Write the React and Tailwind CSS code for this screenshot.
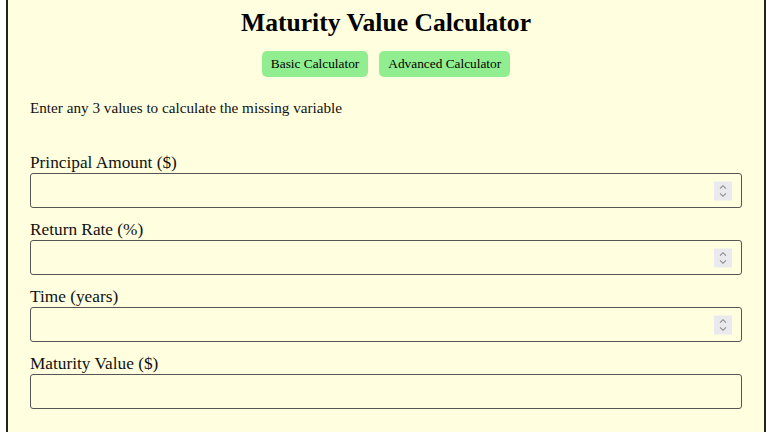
import { useState } from 'react';

const FIELDS = [
  { id: 'principal', label: 'Principal Amount ($)', spinner: true },
  { id: 'rate', label: 'Return Rate (%)', spinner: true },
  { id: 'time', label: 'Time (years)', spinner: true },
  { id: 'maturity', label: 'Maturity Value ($)', spinner: false },
];

// Chrome-style number spinner, drawn since the headless browser hides the native one
const Spinner = () => (
  <span className="pointer-events-none absolute right-[10px] top-1/2 flex h-[19px] w-[18px] -translate-y-1/2 flex-col items-center justify-center gap-[3px] bg-[#e9e9ee]">
    <svg width="8" height="5" viewBox="0 0 8 5" fill="none">
      <path d="M1 4.2 4 1.2 7 4.2" stroke="#8a8a8f" strokeWidth="1.1" />
    </svg>
    <svg width="8" height="5" viewBox="0 0 8 5" fill="none">
      <path d="M1 0.8 4 3.8 7 0.8" stroke="#8a8a8f" strokeWidth="1.1" />
    </svg>
  </span>
);

const App = () => {
  const [values, setValues] = useState({ principal: '', rate: '', time: '', maturity: '' });

  return (
    <div className="min-h-screen bg-white font-['Liberation_Serif','Times_New_Roman',serif] text-[#111]">
      <div className="ml-[6px] w-[760px] min-h-[432px] border-x-2 border-[#222] bg-[#ffffe0] px-[22px] pt-[8px] pb-6">
        <h1 className="text-center text-[25.6px] leading-[30px] font-bold text-black">
          Maturity Value Calculator
        </h1>

        <div className="mt-[13px] flex justify-center gap-[11px]">
          <button
            type="button"
            className="rounded-[5px] bg-[#90ee90] px-[9px] py-[5px] text-[13.33px] leading-[16px] text-black"
          >
            Basic Calculator
          </button>
          <button
            type="button"
            className="rounded-[5px] bg-[#90ee90] px-[9px] py-[5px] text-[13.33px] leading-[16px] text-black"
          >
            Advanced Calculator
          </button>
        </div>

        <p className="mt-[22px] text-[15.2px] leading-[18px]">
          Enter any 3 values to calculate the missing variable
        </p>

        <div className="mt-[36px] flex flex-col gap-[12px]">
          {FIELDS.map((f) => (
            <div key={f.id} className="flex flex-col">
              <label htmlFor={f.id} className="text-[17.3px] leading-[20px]">
                {f.label}
              </label>
              <div className="relative">
                <input
                  id={f.id}
                  type="text"
                  inputMode="decimal"
                  value={values[f.id]}
                  onChange={(e) => setValues((prev) => ({ ...prev, [f.id]: e.target.value }))}
                  className="block h-[35px] w-full rounded-[3px] border border-[#555] bg-transparent pl-[10px] pr-[36px] text-[16px]"
                />
                {f.spinner && <Spinner />}
              </div>
            </div>
          ))}
        </div>
      </div>
    </div>
  );
};

export default App;
